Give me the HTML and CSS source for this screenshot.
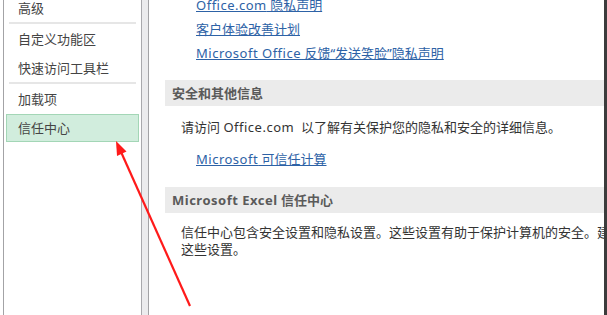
FILE: index.html
```html
<!DOCTYPE html>
<html lang="zh-CN">
<head>
  <meta charset="UTF-8" />
  <title>Excel 选项 – 信任中心</title>
  <link rel="stylesheet" href="styles.css">
</head>
<body>
  <div class="window">
    <div class="sidebar">
      <ul class="nav">
        <li class="item">高级</li>
        <li class="sep"></li>
        <li class="item">自定义功能区</li>
        <li class="item">快速访问工具栏</li>
        <li class="sep"></li>
        <li class="item">加载项</li>
        <li class="item selected">信任中心</li>
      </ul>
    </div>

    <div class="gutter"></div>

    <div class="main">
      <div class="links">
        <a href="#"><span class="en">Office.com</span> 隐私声明</a>
        <a href="#">客户体验改善计划</a>
        <a href="#"><span class="en">Microsoft Office</span> 反馈“发送笑脸”隐私声明</a>
      </div>

      <div class="section-title">安全和其他信息</div>
      <p class="text first">请访问 <span class="en">Office.com</span>&nbsp; 以了解有关保护您的隐私和安全的详细信息。</p>
      <div class="links single">
        <a href="#"><span class="en">Microsoft</span> 可信任计算</a>
      </div>

      <div class="section-title second"><span class="en">Microsoft Excel</span> 信任中心</div>
      <p class="text wrap">信任中心包含安全设置和隐私设置。这些设置有助于保护计算机的安全。建议不要更改这些设置。</p>
    </div>

    <div class="edge"></div>
  </div>

  <!-- annotation arrow drawn over the dialog -->
  <svg class="arrow" width="607" height="315" viewBox="0 0 607 315">
    <line x1="121.5" y1="153" x2="190" y2="306" stroke="#ff1a1a" stroke-width="2.2" />
    <polygon points="116,141 126.5,151.5 117,156" fill="#ff1a1a" />
  </svg>
</body>
</html>
```

FILE: styles.css
```css
body {
  margin: 0;
  background: #ffffff;
  font-family: "Segoe UI", "Noto Sans", "Noto Sans CJK SC", sans-serif;
  font-size: 13px;
  color: #333;
  overflow: hidden;
}

.en {
  letter-spacing: 0.5px;
}

.window {
  display: flex;
  height: 315px;
  padding-left: 3px;
  overflow: hidden;
}

.sidebar {
  flex: none;
  width: 137px;
  border-left: 1px solid #a3a3a6;
  border-right: 1px solid #a9a9ad;
  background: #fff;
  overflow: hidden;
}

.nav {
  list-style: none;
  margin: -7px 0 0;
  padding: 0;
}

.item {
  height: 26px;
  line-height: 26px;
  margin: 1px 2px 0;
  padding-left: 11px;
  border: 1px solid transparent;
  color: #444;
  white-space: nowrap;
}

.item.selected {
  background: #d1eddd;
  border-color: #a3d6b6;
}

.sep {
  height: 2px;
  margin: 0 5px;
  background: #e6e6e6;
}

.gutter {
  flex: none;
  width: 6px;
  background: #ececee;
  border-right: 1px solid #a3a3a6;
}

.main {
  flex: none;
  width: 455px;
  background: #fff;
  overflow: hidden;
}

.links {
  display: flex;
  flex-direction: column;
  align-items: flex-start;
  margin-top: -7px;
  padding-left: 47px;
}

.links a {
  line-height: 24px;
  color: #2d62a6;
  text-decoration: underline;
  white-space: nowrap;
}

.links.single {
  margin-top: 11px;
}

.section-title {
  margin: 15px 0 0 16px;
  height: 26px;
  line-height: 26px;
  padding-left: 7px;
  background: #ebebeb;
  color: #5a5a5a;
  font-weight: bold;
  white-space: nowrap;
}

.section-title.second {
  margin-top: 16px;
}

.text {
  margin: 12px 0 0 32px;
  line-height: 18px;
  color: #333;
  white-space: nowrap;
}

.text.wrap {
  width: 496px;
  margin-top: 11px;
  line-height: 17px;
  white-space: normal;
}

.edge {
  flex: none;
  width: 3px;
  background: #3c3c3c;
}

.arrow {
  position: absolute;
  left: 0;
  top: 0;
  pointer-events: none;
}
```
